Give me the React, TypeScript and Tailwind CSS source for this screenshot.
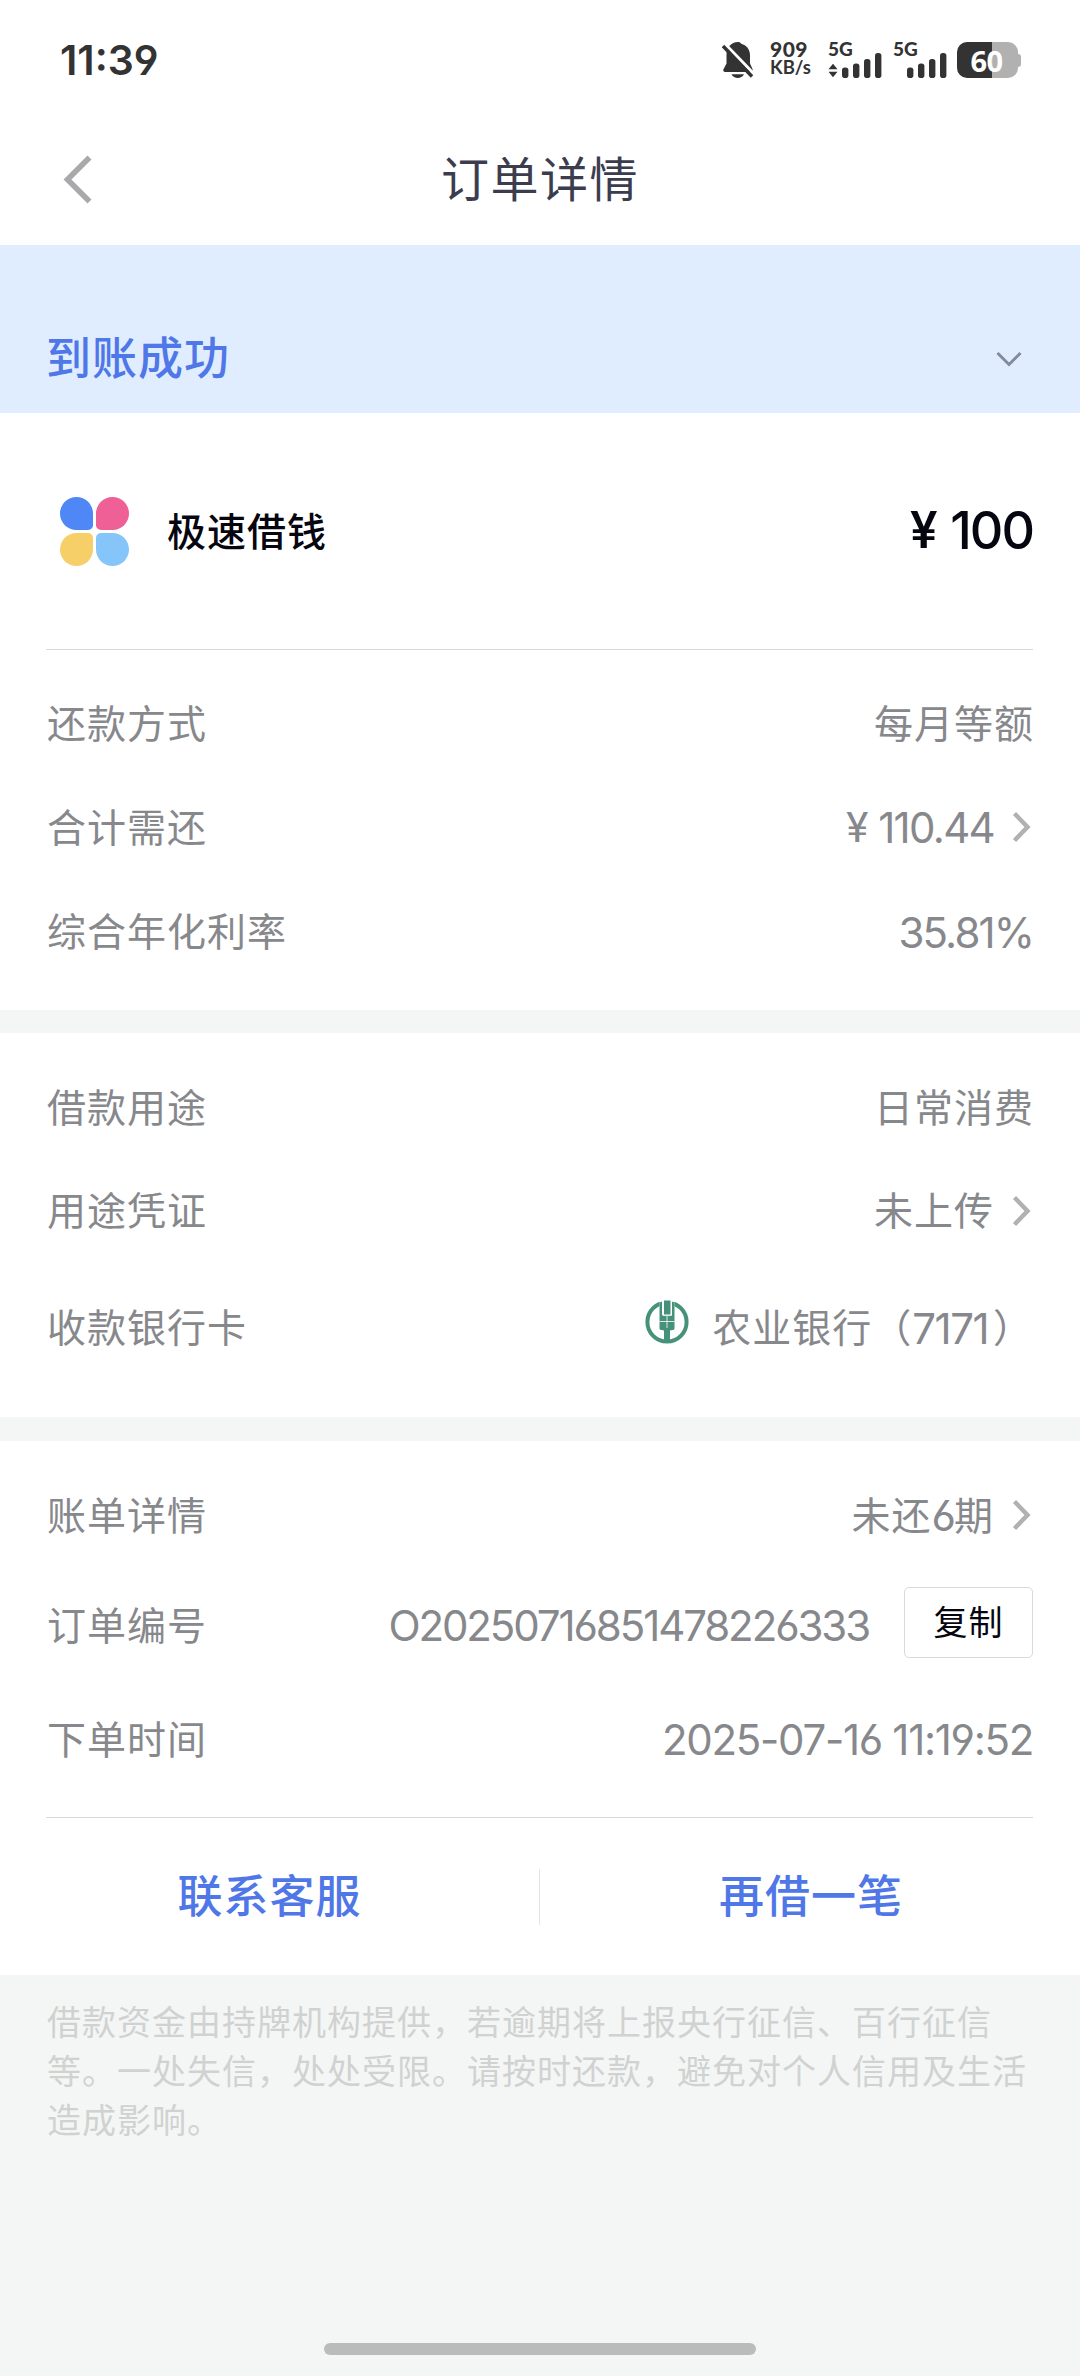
import type { ReactNode } from "react";

function Chevron() {
  return (
    <svg className="ml-[17px] mr-[2px] h-[34px] w-[20px] shrink-0" viewBox="0 0 20 34" fill="none">
      <path d="M3.500 3.500 16.500 17 3.500 30.500" stroke="#b1b1b3" strokeWidth="4.400" />
    </svg>
  );
}

function Num({ children, className = "" }: { children: ReactNode; className?: string }) {
  return (
    <span
      className={`mt-[2px] whitespace-pre font-['Inter'] text-[42px] [font-feature-settings:'cv03','cv04'] ${className}`}
    >
      {children}
    </span>
  );
}

function Text({ children, className = "" }: { children: ReactNode; className?: string }) {
  return <span className={`-mt-[5px] tracking-[1px] ${className}`}>{children}</span>;
}

function Row({ label, className, children }: { label: string; className: string; children: ReactNode }) {
  return (
    <div className={`flex items-center justify-between ${className}`}>
      <Text className="ml-[1px]">{label}</Text>
      <div className="flex items-center">{children}</div>
    </div>
  );
}

function SignalBars() {
  return (
    <svg className="h-[26px] w-[40px]" viewBox="0 0 40 26" fill="#333">
      <rect x="0" y="15.500" width="6.400" height="10.500" rx="2.800" />
      <rect x="11" y="11.500" width="6.400" height="14.500" rx="2.800" />
      <rect x="22" y="7" width="6.400" height="19" rx="2.800" />
      <rect x="33" y="1" width="6.400" height="25" rx="2.800" />
    </svg>
  );
}

function StatusBar() {
  return (
    <div className="flex h-[120px] items-center justify-between pl-[60px] pr-[59px] text-[#333]">
      <span className="font-['Inter'] text-[41px] font-semibold leading-none [font-feature-settings:'cv03','cv04']">
        11:39
      </span>
      <div className="flex h-[36px]">
        <svg className="h-[36px] w-[32px]" viewBox="0 0 32 36">
          <path
            d="M16 0c1.5 0 2.600.6 3.200 1.700C24.500 3 28 7.500 28 13v8.500l2.500 5.500c.6 1.700 0 3-1.800 3H3.300c-2 0-2.500-1.500-1.700-3L4.500 21.500V13C4.500 5.500 9 .0 16 0Z"
            fill="#333"
          />
          <path d="M9.500 32.200h12.500c-2.500 5-10 5-12.500 0Z" fill="#333" />
          <path d="M1 0 32 32" stroke="#fff" strokeWidth="3.200" />
          <path d="M1 4 30 34.500" stroke="#333" strokeWidth="3.400" />
        </svg>
        <div className="ml-[16px] flex w-[44px] flex-col font-['Lato'] font-bold">
          <span className="h-[20px] text-[21px] font-black leading-[13px] tracking-[0.500px]">909</span>
          <span className="text-[18.500px] leading-[21px] tracking-[0px]">KB/s</span>
        </div>
        <div className="ml-[14px] flex h-[36px] w-[54px] flex-col justify-between">
          <span className="h-[10px] font-['Lato'] text-[19px] font-black leading-[13px]">5G</span>
          <div className="flex items-end">
            <svg className="mr-[4px] h-[15px] w-[10px]" viewBox="0 0 10 15" fill="#333">
              <path d="M5 .8 9.500 6.300h-9ZM5 14.200.5 8.700h9Z" />
            </svg>
            <SignalBars />
          </div>
        </div>
        <div className="ml-[11px] flex h-[36px] w-[54px] flex-col justify-between">
          <span className="h-[10px] font-['Lato'] text-[19px] font-black leading-[13px]">5G</span>
          <div className="flex items-end pl-[14px]">
            <SignalBars />
          </div>
        </div>
        <div className="ml-[10px] flex items-center">
          <div className="flex h-[36px] w-[61px] items-center justify-center rounded-[10px] bg-linear-to-r from-[#333] from-[57%] to-[#b1b1b1] to-[57%] pr-[2px]">
            <span className="font-['Open_Sans'] text-[29px] font-bold leading-none tracking-[-0.500px] text-white">60</span>
          </div>
          <div className="h-[13px] w-[3px] rounded-r-[3px] bg-[#b1b1b1]" />
        </div>
      </div>
    </div>
  );
}

function BankLogo() {
  return (
    <svg className="mb-[12px] mr-[23px] h-[44px] w-[44px]" viewBox="0 0 44 44">
      <circle cx="22" cy="22" r="19.600" fill="none" stroke="#45917a" strokeWidth="4" />
      <path d="M14.500 0h15v14h-15Z" fill="#fff" />
      <path
        d="M14.500 2.500V28c0 1.500.5 2 4.500 2.500v11h6v-11c4-.5 4.500-1 4.500-2.500V2.500l-2.500-1V15h-10V1.500Z"
        fill="#45917a"
      />
      <path d="M19 .5h6.500v14H19Z" fill="#45917a" />
      <path d="M18 0v15.500h8.500V0M22 16v12M14.500 21.500h15" fill="none" stroke="#fff" strokeWidth="0.800" />
    </svg>
  );
}

export default function App() {
  return (
    <div className="flex h-[2376px] w-[1080px] flex-col overflow-hidden bg-[#f4f6f5] font-['Noto_Sans_CJK_SC',sans-serif] text-[39px] leading-[60px] text-[#87888c]">
      <header className="h-[245px] bg-white">
        <StatusBar />
        <div className="grid h-[118px] grid-cols-[100px_1fr_100px] items-center pl-[60px] pr-[60px]">
          <svg className="h-[52px] w-[36px]" viewBox="0 0 36 52" fill="none">
            <path d="M29.500 4.500 7.500 26.500 29.500 48.500" stroke="#a9a9ab" strokeWidth="5.600" />
          </svg>
          <h1 className="-mt-[6px] text-center text-[48px] tracking-[1.500px] text-[#3b3d4f]">订单详情</h1>
        </div>
      </header>

      <div className="flex h-[168px] items-end justify-between bg-[#e0edfe] pb-[27px] pl-[46px] pr-[57px]">
        <span className="text-[45px] font-medium tracking-[1px] text-[#4f77e8]">到账成功</span>
        <svg className="mb-[15px] h-[24px] w-[28px]" viewBox="0 0 28 24" fill="none">
          <path d="M2.500 6 14 17.500 25.500 6" stroke="#818b9b" strokeWidth="3" />
        </svg>
      </div>

      <section className="h-[597px] bg-white pl-[46px] pr-[47px]">
        <div className="flex h-[237px] items-center justify-between border-b border-[#d9dadc]">
          <div className="flex items-center">
            <div className="ml-[14px] mr-[38px] grid grid-cols-2 gap-[3px]">
              <div className="h-[33px] w-[33px] rounded-[17px] rounded-br-[5px] bg-[#4f87f7]" />
              <div className="h-[33px] w-[33px] rounded-[17px] rounded-bl-[5px] bg-[#ee6096]" />
              <div className="h-[33px] w-[33px] rounded-[17px] rounded-tr-[5px] bg-[#f6cf68]" />
              <div className="h-[33px] w-[33px] rounded-[17px] rounded-tl-[5px] bg-[#86c5f9]" />
            </div>
            <Text className="font-medium text-[#05060f]">极速借钱</Text>
          </div>
          <span className="flex items-center font-['Inter'] text-[52px] font-medium text-[#05060f]">
            <span className="mr-[13px] font-['Roboto'] text-[51px]">¥</span>
            <span className="tracking-[-2px]">100</span>
          </span>
        </div>
        <Row label="还款方式" className="mt-[22px] h-[103px]">
          <Text className="-mr-[1px]">每月等额</Text>
        </Row>
        <Row label="合计需还" className="h-[104px]">
          <span className="mr-[10px] mt-[2px] font-['Roboto'] text-[42px]">¥</span>
          <Num className="tracking-[-1.700px]">110.44</Num>
          <Chevron />
        </Row>
        <Row label="综合年化利率" className="h-[105px]">
          <Num className="tracking-[-1.900px]">35.81%</Num>
        </Row>
      </section>

      <section className="mt-[23px] h-[384px] bg-white pl-[46px] pr-[47px] pt-[23px]">
        <Row label="借款用途" className="h-[103px]">
          <Text className="-mr-[1px]">日常消费</Text>
        </Row>
        <Row label="用途凭证" className="h-[103px]">
          <Text>未上传</Text>
          <Chevron />
        </Row>
        <Row label="收款银行卡" className="h-[131px]">
          <BankLogo />
          <Text>农业银行（</Text>
          <Num className="mr-[5px] tracking-[-1.500px]">7171</Num>
          <Text className="tracking-[0px]">）</Text>
        </Row>
      </section>

      <section className="mt-[24px] h-[534px] bg-white pl-[46px] pr-[47px] pt-[20px]">
        <Row label="账单详情" className="h-[108px]">
          <Text>未还</Text>
          <Num className="tracking-[-2px]">6</Num>
          <Text>期</Text>
          <Chevron />
        </Row>
        <Row label="订单编号" className="h-[112px]">
          <Num className="tracking-[-2.100px]">O20250716851478226333</Num>
          <button className="mb-[5px] ml-[35px] flex h-[71px] w-[129px] items-center justify-center rounded-[5px] border border-[#d9dadc] pb-[4px] text-[34px] tracking-[1px] text-[#05060f]">
            复制
          </button>
        </Row>
        <Row label="下单时间" className="h-[116px]">
          <Num className="tracking-[-1.300px]">2025-07-16 11:19:52</Num>
        </Row>
        <div className="mt-[20px] grid h-[158px] grid-cols-[1fr_1px_1fr] items-center border-t border-[#d9dadc] text-center text-[45px] font-medium tracking-[1px] text-[#4f77e8]">
          <span className="-ml-[46px] -mt-[5px]">联系客服</span>
          <span className="h-[56px] bg-[#e3e4e6]" />
          <span className="-mr-[49px] -mt-[5px]">再借一笔</span>
        </div>
      </section>

      <p className="pl-[47px] pr-[40px] pt-[21px] text-[34px] leading-[49px] tracking-[1px] text-[#d0d2d1]">
        借款资金由持牌机构提供，若逾期将上报央行征信、百行征信
        <br />
        等。一处失信，处处受限。请按时还款，避免对个人信用及生活
        <br />
        造成影响。
      </p>
      <div className="mx-auto mb-[21px] mt-auto h-[12px] w-[432px] rounded-full bg-[#babcbb]" />
    </div>
  );
}
